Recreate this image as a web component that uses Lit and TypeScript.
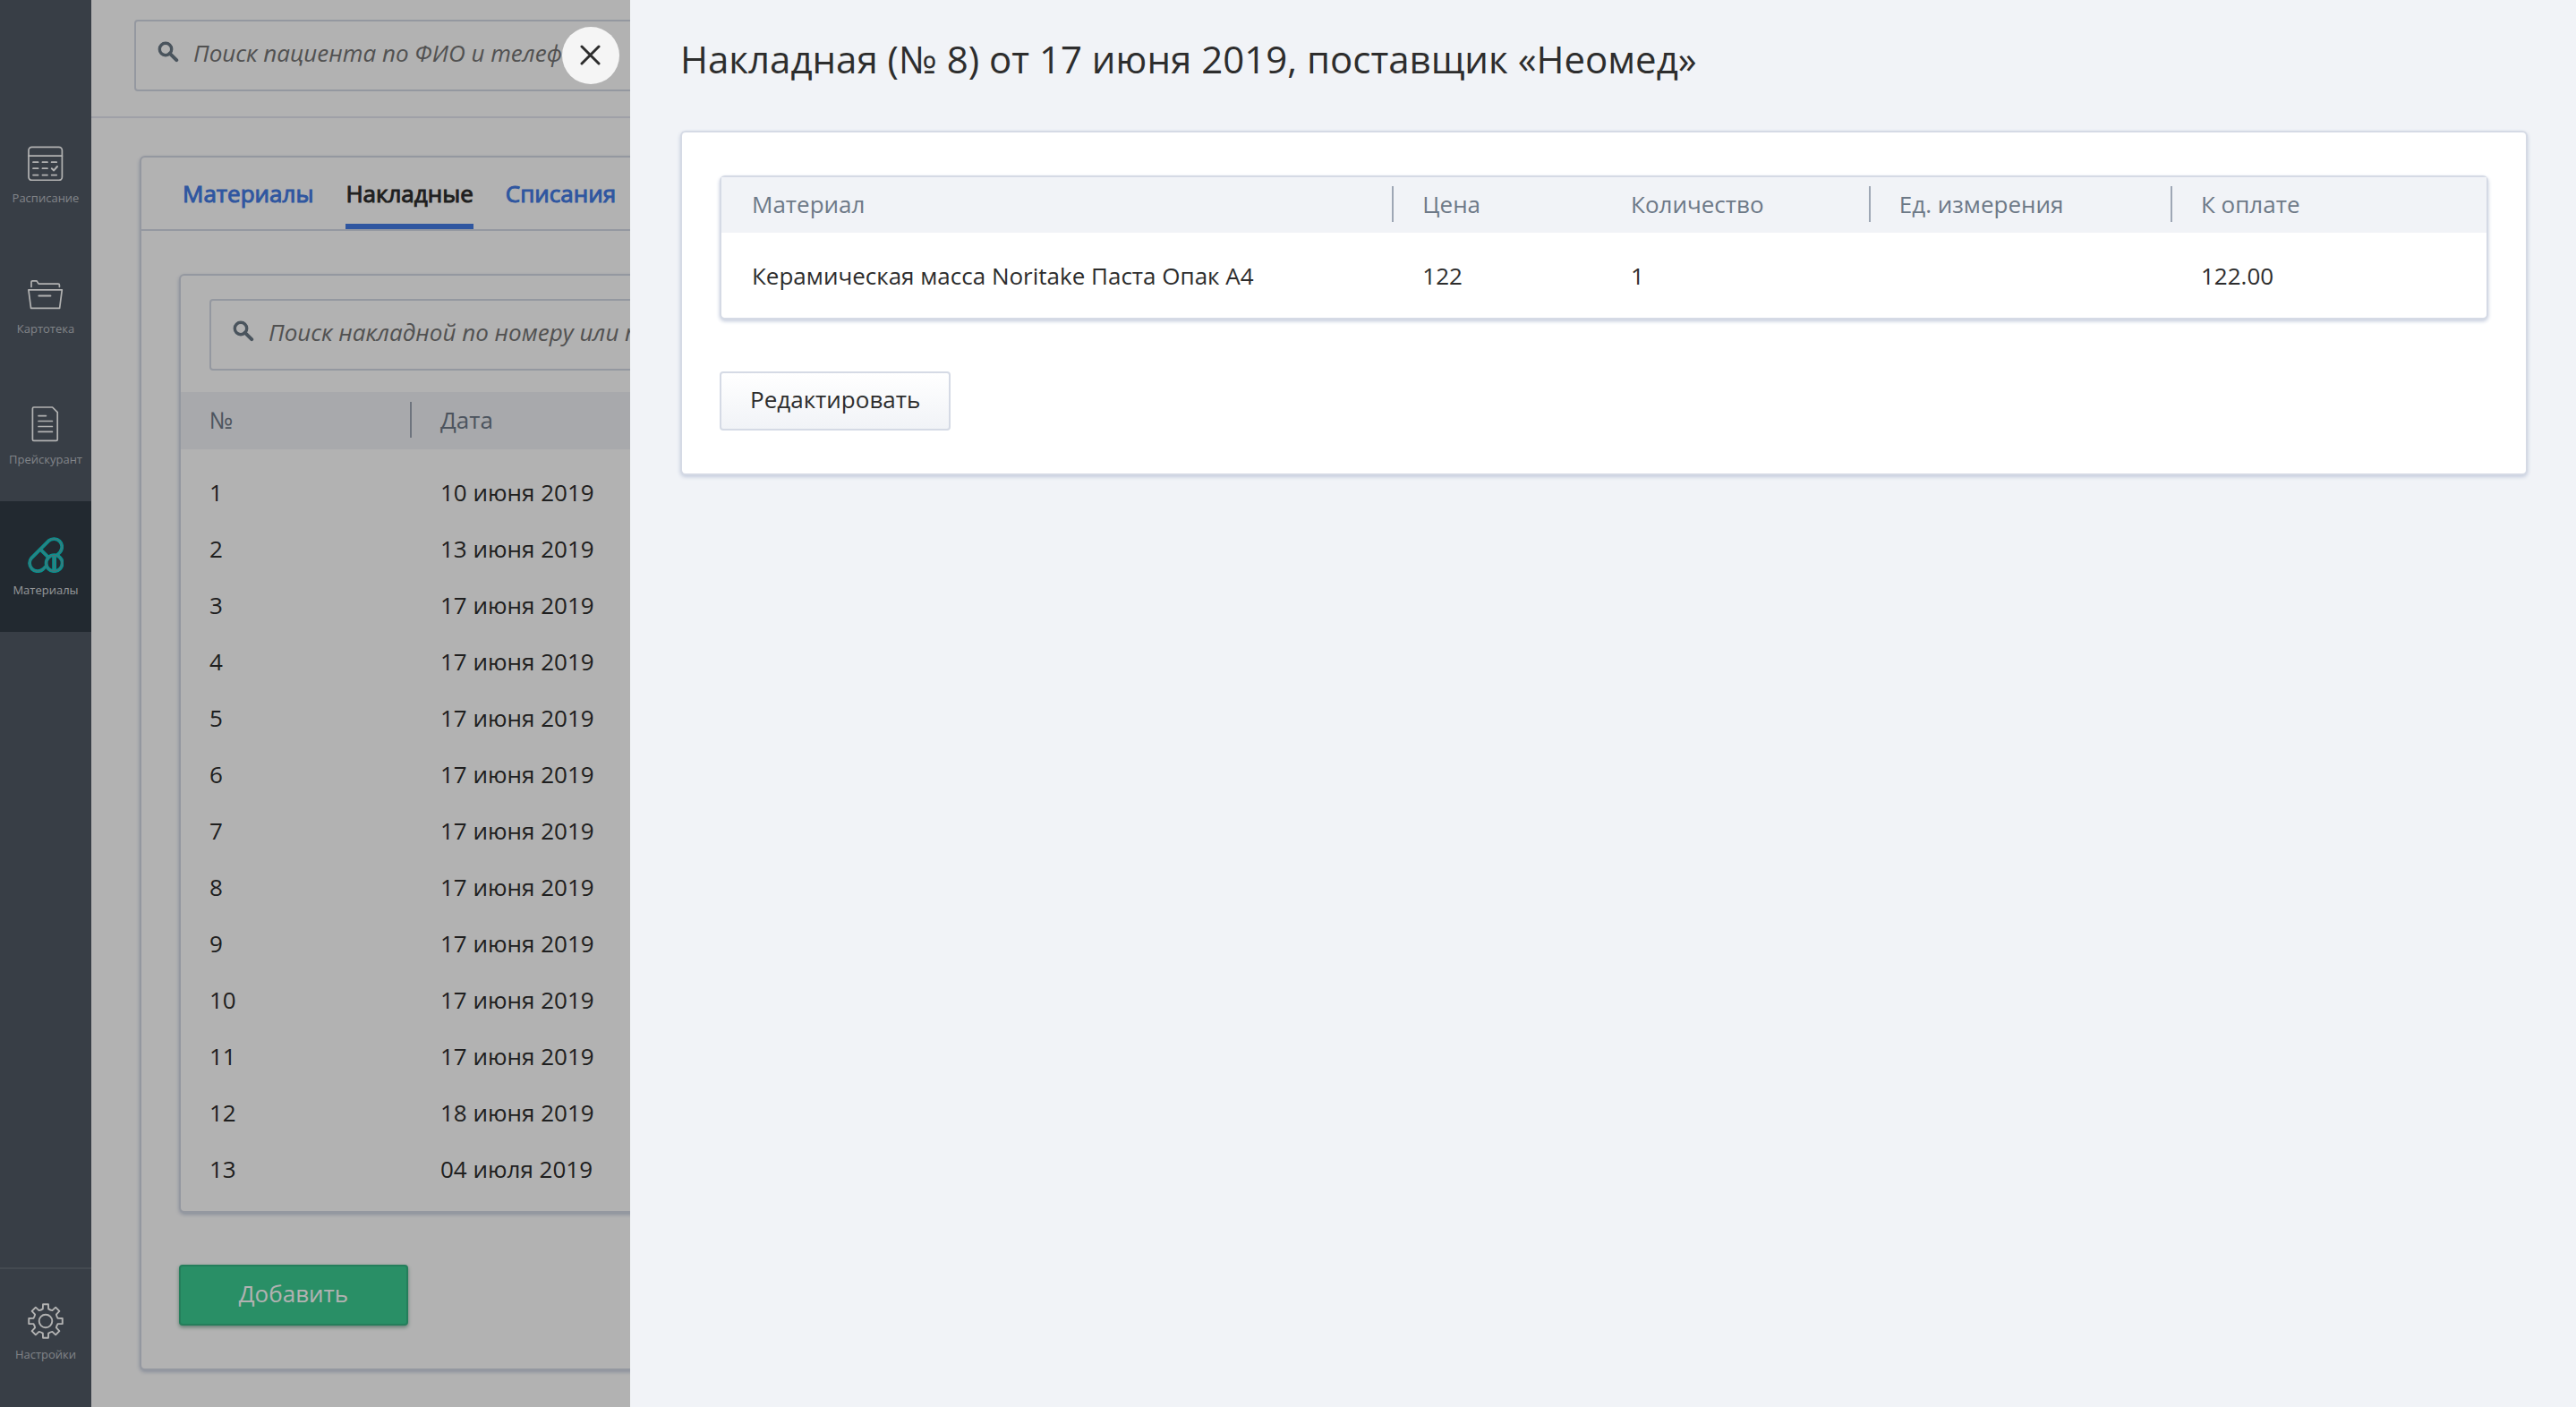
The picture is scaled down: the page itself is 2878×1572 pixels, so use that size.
import { LitElement, html, css, svg } from "lit";
import { customElement, property } from "lit/decorators.js";
import { classMap } from "lit/directives/class-map.js";

const polar = (radius: number, degrees: number): string => {
  const a = (degrees * Math.PI) / 180;
  return `${(20 + radius * Math.sin(a)).toFixed(2)} ${(20 - radius * Math.cos(a)).toFixed(2)}`;
};

/* Outline of an eight-toothed gear centred in a 40 by 40 box. */
const gearPath = (): string => {
  let d = "";
  for (let k = 0; k < 8; k++) {
    const a = k * 45;
    d += `${k === 0 ? "M" : "L"}${polar(14, a - 13)}L${polar(19, a - 9)}L${polar(19, a + 9)}L${polar(14, a + 13)}`;
    d += `A11 11 0 0 0 ${polar(14, a + 32)}`;
  }
  return d + "Z";
};

const icons: Record<string, unknown> = {
  schedule: svg`
    <g fill="none" stroke="#fff" stroke-width="1.7" stroke-linecap="round" stroke-linejoin="round">
      <rect x="1" y="2.4" width="37.4" height="37" rx="3.6"/>
      <path d="M1 12.2H38.4M6 19.2h5.6M16.4 19.2h5.6M26.6 19.2h5.6M6 26.2h5.6M16.4 26.2h5.6M6 33.6h5.6M16.4 33.6h5.6M26.6 33.6h5.6"/>
      <path stroke-width="2" d="M26.8 26.2l2.4 2.2 3.8-4.4"/>
    </g>`,
  folder: svg`
    <g fill="none" stroke="#fff" stroke-width="1.7" stroke-linecap="round" stroke-linejoin="round">
      <path d="M4 12.4V7q0-1.2 1.2-1.2H9.4q.8 0 1.2.8l1 1.8q.4.8 1.2.8H34q1.4 0 1.4 1.4v1.8"/>
      <path d="M.9 15.8H38.3L35.6 36.4H3.6Z"/>
      <path stroke-width="2" d="M12.4 22.6H25.4"/>
    </g>`,
  document: svg`
    <g fill="none" stroke="#fff" stroke-width="1.7" stroke-linecap="round" stroke-linejoin="round">
      <path d="M6.8 1H27.6L33.2 6.6V37q0 1.4-1.4 1.4H6.8q-1.4 0-1.4-1.4V2.4Q5.4 1 6.8 1Z"/>
      <path d="M12 10.6h8.4M12 16.5h15.4M12 22.5h15.4M12 28.4h15.4"/>
    </g>`,
  pills: svg`
    <g fill="#323b45" stroke-linejoin="round" stroke-linecap="round">
      <g stroke="#0dd0cd" stroke-width="3.8">
        <path d="M4.3 23.3L23.3 4.3A9 9 0 0 1 36 17L17 36A9 9 0 0 1 4.3 23.3Z"/>
        <path d="M14.2 13.8L23.2 22.8"/>
        <circle cx="29.6" cy="29.2" r="9"/>
        <path stroke-width="4.8" stroke-linecap="butt" d="M29.6 20.6V37.8"/>
      </g>
      <g stroke="#7d9ba2" stroke-width="1" fill="none">
        <path d="M20.6 32.4L17 36A9 9 0 0 1 4.3 23.3L23.3 4.3A9 9 0 0 1 36 17L34.4 19.2M14.2 13.8L22.6 22.2"/>
        <circle cx="29.6" cy="29.2" r="9"/>
        <path d="M29.6 20.6V37.8"/>
      </g>
    </g>`,
  gear: svg`
    <g fill="none" stroke="#fff" stroke-width="1.9" stroke-linejoin="round">
      <path d="${gearPath()}"/>
      <circle cx="20" cy="20" r="7.3"/>
    </g>`,
};

interface NavEntry {
  icon: string;
  label: string;
  active?: boolean;
}

const sections: NavEntry[] = [
  { icon: "schedule", label: "Расписание" },
  { icon: "folder", label: "Картотека" },
  { icon: "document", label: "Прейскурант" },
  { icon: "pills", label: "Материалы", active: true },
];

const invoices: [number, string][] = [
  [1, "10 июня 2019"],
  [2, "13 июня 2019"],
  [3, "17 июня 2019"],
  [4, "17 июня 2019"],
  [5, "17 июня 2019"],
  [6, "17 июня 2019"],
  [7, "17 июня 2019"],
  [8, "17 июня 2019"],
  [9, "17 июня 2019"],
  [10, "17 июня 2019"],
  [11, "17 июня 2019"],
  [12, "18 июня 2019"],
  [13, "04 июля 2019"],
];

@customElement("side-nav")
class SideNav extends LitElement {
  static styles = css`
    :host {
      display: flex;
      flex-direction: column;
      justify-content: space-between;
      padding-top: 122px;
      background: #515a65;
    }
    .item {
      display: flex;
      flex-direction: column;
      align-items: center;
      gap: 10px;
      height: 106px;
      padding-top: 40px;
      font-size: 13px;
      line-height: 18px;
      color: #b9bdc3;
      text-decoration: none;
    }
    .item.active {
      background: #323b45;
      color: #d6d9dc;
    }
    .footer {
      border-top: 2px solid #626a75;
      padding-bottom: 10px;
    }
    .footer .item {
      gap: 8px;
      padding-top: 38px;
    }
    svg {
      width: 40px;
      height: 40px;
      flex: none;
    }
  `;

  private item(entry: NavEntry) {
    return html`<a class=${classMap({ item: true, active: !!entry.active })} href="#">
      <svg viewBox="0 0 40 40" aria-hidden="true">${icons[entry.icon]}</svg>
      <span>${entry.label}</span>
    </a>`;
  }

  render() {
    return html`
      <nav>${sections.map((entry) => this.item(entry))}</nav>
      <div class="footer">${this.item({ icon: "gear", label: "Настройки" })}</div>
    `;
  }
}

@customElement("search-field")
class SearchField extends LitElement {
  @property() placeholder = "";

  static styles = css`
    :host {
      display: block;
    }
    .box {
      box-sizing: border-box;
      display: flex;
      gap: 16px;
      height: 80px;
      padding: 0 24px 6px;
      border: 2px solid #d5dae5;
      border-radius: 4px;
      background: #fff;
    }
    svg {
      width: 24px;
      height: 24px;
      margin-top: 22px;
      flex: none;
    }
    input {
      flex: 1;
      min-width: 0;
      padding: 0;
      border: 0;
      outline: 0;
      background: transparent;
      font: italic 26px/36px "Open Sans", "Noto Sans", sans-serif;
      color: #2d2d2d;
    }
    input::placeholder {
      color: #757575;
    }
  `;

  render() {
    return html`<label class="box">
      <svg viewBox="0 0 24 24" aria-hidden="true">
        <g fill="none" stroke="#6a7986" stroke-width="3.4">
          <circle cx="9" cy="9" r="6.7" />
          <path d="M13.6 13.6L21.2 21.2" stroke-width="4" stroke-linecap="round" />
        </g>
      </svg>
      <input type="search" placeholder=${this.placeholder} aria-label=${this.placeholder} />
    </label>`;
  }
}

const shared = css`
  .card {
    border: 2px solid #d5dae5;
    border-radius: 6px;
    background: #fff;
    box-shadow: 0 2px 4px #c3cbdc;
  }
  table {
    width: 100%;
    border-collapse: collapse;
    table-layout: fixed;
    color: #2d2d2d;
  }
  th,
  td {
    padding: 0;
    text-align: left;
    font-weight: 400;
  }
  thead tr {
    background: #f1f3f7;
  }
  th {
    height: 62px;
    padding-bottom: 2px;
    box-sizing: border-box;
    color: #6d7987;
  }
  .label {
    display: block;
    height: 40px;
    line-height: 40px;
    padding-left: 32px;
    border-left: 2px solid transparent;
  }
  .label.split {
    border-color: #9ea7b5;
  }
  td {
    height: 63px;
    padding-left: 34px;
  }
  .gap td {
    height: 16px;
  }
  button {
    font: 26px/36px "Open Sans", "Noto Sans", sans-serif;
    cursor: pointer;
  }
`;

@customElement("invoice-list")
class InvoiceList extends LitElement {
  static styles = [
    shared,
    css`
      :host {
        display: block;
      }
      header {
        padding: 22px 48px 28px;
        border-bottom: 2px solid #e4e5ef;
      }
      .page {
        padding: 42px 54px 38px;
      }
      .tabs {
        display: flex;
        gap: 36px;
        padding: 0 46px;
        border-bottom: 2px solid #d5dae5;
      }
      .tab {
        padding: 22px 0 16px;
        border-bottom: 6px solid transparent;
        line-height: 36px;
        color: #447ce6;
        text-decoration: none;
        -webkit-text-stroke: 1px currentColor;
      }
      .tab.active {
        color: #2d2d2d;
        border-color: #447ce6;
      }
      .body {
        padding: 48px 42px;
      }
      .list {
        margin-bottom: 58px;
      }
      .list search-field {
        margin: 26px 32px 24px;
      }
      .number {
        width: 256px;
      }
      th {
        height: 64px;
      }
      th:first-child .label {
        border-left: 0;
      }
      td:first-child {
        padding-left: 32px;
      }
      button {
        box-sizing: border-box;
        display: block;
        min-width: 256px;
        height: 68px;
        padding: 0 32px 4px;
        border: 2px solid #35b583;
        border-radius: 4px;
        background: #3bcd93;
        color: #fff;
        box-shadow: 0 2px 4px #8fb3a4;
      }
    `,
  ];

  render() {
    return html`
      <header><search-field placeholder="Поиск пациента по ФИО и телефону"></search-field></header>
      <div class="page">
        <section class="card">
          <nav class="tabs">
            <a class="tab" href="#">Материалы</a>
            <a class="tab active" href="#" aria-current="page">Накладные</a>
            <a class="tab" href="#">Списания</a>
          </nav>
          <div class="body">
            <div class="card list">
              <search-field placeholder="Поиск накладной по номеру или поставщику"></search-field>
              <table>
                <colgroup><col class="number" /><col /></colgroup>
                <thead>
                  <tr>
                    <th><span class="label">№</span></th>
                    <th><span class="label split">Дата</span></th>
                  </tr>
                </thead>
                <tbody>
                  <tr class="gap"><td colspan="2"></td></tr>
                  ${invoices.map(([n, date]) => html`<tr><td>${n}</td><td>${date}</td></tr>`)}
                  <tr class="gap"><td colspan="2"></td></tr>
                </tbody>
              </table>
            </div>
            <button type="button">Добавить</button>
          </div>
        </section>
      </div>
    `;
  }
}

@customElement("invoice-drawer")
class InvoiceDrawer extends LitElement {
  static styles = [
    shared,
    css`
      :host {
        display: block;
        box-sizing: border-box;
        padding: 36px 54px 36px 56px;
        background: #f1f3f7;
        color: #2d2d2d;
      }
      h1 {
        margin: 0 0 50px;
        font-size: 42px;
        line-height: 60px;
        font-weight: 400;
      }
      .sheet {
        padding: 48px 42px;
      }
      .lines {
        margin-bottom: 58px;
      }
      .material { width: 38%; }
      .price { width: 11.8%; }
      .amount { width: 15.2%; }
      .unit { width: 17.1%; }
      .total { width: 17.9%; }
      button {
        box-sizing: border-box;
        display: block;
        height: 66px;
        padding: 0 32px 4px;
        border: 2px solid #d5dae5;
        border-radius: 4px;
        background: linear-gradient(#fff, #f1f3f7);
        color: #2d2d2d;
      }
    `,
  ];

  render() {
    return html`
      <h1>Накладная (№ 8) от 17 июня 2019, поставщик «Неомед»</h1>
      <section class="card sheet">
        <div class="card lines">
          <table>
            <colgroup>
              <col class="material" /><col class="price" /><col class="amount" /><col class="unit" /><col class="total" />
            </colgroup>
            <thead>
              <tr>
                <th><span class="label">Материал</span></th>
                <th><span class="label split">Цена</span></th>
                <th><span class="label">Количество</span></th>
                <th><span class="label split">Ед. измерения</span></th>
                <th><span class="label split">К оплате</span></th>
              </tr>
            </thead>
            <tbody>
              <tr class="gap"><td colspan="5"></td></tr>
              <tr>
                <td>Керамическая масса Noritake Паста Опак A4</td>
                <td>122</td>
                <td>1</td>
                <td></td>
                <td>122.00</td>
              </tr>
              <tr class="gap"><td colspan="5"></td></tr>
            </tbody>
          </table>
        </div>
        <button type="button">Редактировать</button>
      </section>
    `;
  }
}

@customElement("app-root")
class AppRoot extends LitElement {
  static styles = css`
    :host {
      display: block;
      font: 26px/36px "Open Sans", "Noto Sans", sans-serif;
      background: #fff;
    }
    .shell {
      display: grid;
      grid-template-columns: 102px minmax(0, 1fr);
      min-height: 100vh;
    }
    .overlay {
      position: fixed;
      inset: 0;
      display: grid;
      grid-template-columns: 704px minmax(0, 1fr);
      background: rgba(0, 0, 0, 0.3);
    }
    .aside {
      display: flex;
      justify-content: flex-end;
      align-items: flex-start;
      padding: 30px 12px;
    }
    .close {
      display: flex;
      align-items: center;
      justify-content: center;
      width: 64px;
      height: 64px;
      padding: 0;
      border: 0;
      border-radius: 50%;
      background: #f5f5f5;
      cursor: pointer;
    }
    .close svg {
      width: 24px;
      height: 24px;
    }
  `;

  render() {
    return html`
      <div class="shell">
        <side-nav></side-nav>
        <invoice-list></invoice-list>
      </div>
      <div class="overlay">
        <div class="aside">
          <button class="close" type="button" aria-label="Закрыть">
            <svg viewBox="0 0 24 24" aria-hidden="true">
              <path d="M2 2L21 21M21 2L2 21" fill="none" stroke="#2d2d2d" stroke-width="3" stroke-linecap="round" />
            </svg>
          </button>
        </div>
        <invoice-drawer role="dialog"></invoice-drawer>
      </div>
    `;
  }
}
